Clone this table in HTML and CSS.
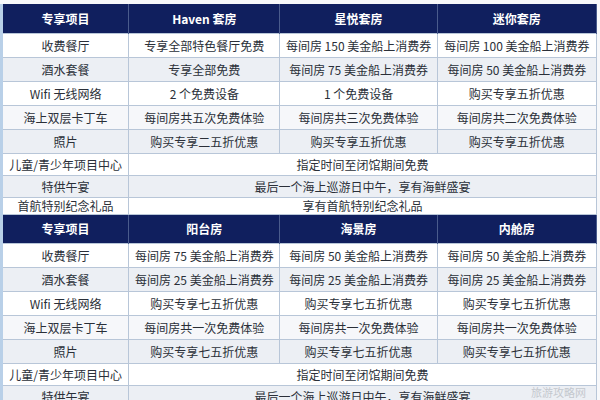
FILE: index.html
```html
<!DOCTYPE html>
<html lang="zh">
<head>
<meta charset="utf-8">
<link rel="stylesheet" href="styles.css">
</head>
<body>
<div class="page">
<table class="grid">
  <colgroup><col class="c1"><col class="c2"><col class="c3"><col class="c4"></colgroup>
  <tr class="head"><th>专享项目</th><th>Haven 套房</th><th>星悦套房</th><th>迷你套房</th></tr>
  <tr class="w"><td>收费餐厅</td><td>专享全部特色餐厅免费</td><td>每间房 150 美金船上消费券</td><td>每间房 100 美金船上消费券</td></tr>
  <tr class="g"><td>酒水套餐</td><td>专享全部免费</td><td>每间房 75 美金船上消费券</td><td>每间房 50 美金船上消费券</td></tr>
  <tr class="w"><td>Wifi 无线网络</td><td>2 个免费设备</td><td>1 个免费设备</td><td>购买专享五折优惠</td></tr>
  <tr class="l"><td>海上双层卡丁车</td><td>每间房共五次免费体验</td><td>每间房共三次免费体验</td><td>每间房共二次免费体验</td></tr>
  <tr class="g"><td>照片</td><td>购买专享二五折优惠</td><td>购买专享五折优惠</td><td>购买专享五折优惠</td></tr>
  <tr class="w sm"><td>儿童/青少年项目中心</td><td colspan="3">指定时间至闭馆期间免费</td></tr>
  <tr class="g sm"><td>特供午宴</td><td colspan="3">最后一个海上巡游日中午，享有海鲜盛宴</td></tr>
  <tr class="w xs"><td>首航特别纪念礼品</td><td colspan="3">享有首航特别纪念礼品</td></tr>
  <tr class="head h2"><th>专享项目</th><th>阳台房</th><th>海景房</th><th>内舱房</th></tr>
  <tr class="w"><td>收费餐厅</td><td>每间房 75 美金船上消费券</td><td>每间房 50 美金船上消费券</td><td>每间房 50 美金船上消费券</td></tr>
  <tr class="g"><td>酒水套餐</td><td>每间房 25 美金船上消费券</td><td>每间房 25 美金船上消费券</td><td>每间房 25 美金船上消费券</td></tr>
  <tr class="w"><td>Wifi 无线网络</td><td>购买专享七五折优惠</td><td>购买专享七五折优惠</td><td>购买专享七五折优惠</td></tr>
  <tr class="l"><td>海上双层卡丁车</td><td>每间房共一次免费体验</td><td>每间房共一次免费体验</td><td>每间房共一次免费体验</td></tr>
  <tr class="g"><td>照片</td><td>购买专享七五折优惠</td><td>购买专享七五折优惠</td><td>购买专享七五折优惠</td></tr>
  <tr class="w sm"><td>儿童/青少年项目中心</td><td colspan="3">指定时间至闭馆期间免费</td></tr>
  <tr class="g sm"><td>特供午宴</td><td colspan="3">最后一个海上巡游日中午，享有海鲜盛宴</td></tr>
</table>
<div class="mark">旅游攻略网</div>
</div>
</body>
</html>
```
FILE: styles.css
```css
html, body {
  margin: 0;
  padding: 0;
  background: #ffffff;
}
.page {
  width: 600px;
  height: 400px;
  overflow: hidden;
  position: relative;
  padding-top: 4px;
  box-sizing: border-box;
  background: #f7f8fa;
}
.grid {
  width: 597px;
  border-collapse: collapse;
  table-layout: fixed;
  font-family: "Noto Sans CJK SC", "Noto Sans", sans-serif;
  font-size: 12px;
  color: #2a2f38;
  border-left: 3px solid #b9d0e8;
}
.c1 { width: 127px; }
.c2 { width: 151px; }
.c3 { width: 157px; }
.c4 { width: 159px; }
.grid td, .grid th {
  text-align: center;
  vertical-align: middle;
  padding: 0;
  white-space: nowrap;
  overflow: hidden;
  line-height: 14px;
}
.grid td {
  border: 1px solid #b8c6d8;
  height: 23px;
}
.grid th {
  background: #101f5e;
  color: #ffffff;
  font-weight: bold;
  height: 29px;
  border-left: 1px solid #4a5b8c;
  border-right: 1px solid #4a5b8c;
}
.grid tr.h2 th { height: 28px; }
.grid tr.w td { background: #ffffff; }
.grid tr.g td { background: #eceff4; }
.grid tr.l td { background: #f6f7fa; }
.grid tr.sm td { height: 21px; }
.grid tr.xs td { height: 16px; }
.mark {
  position: absolute;
  right: 14px;
  bottom: 0;
  font-family: "Noto Sans CJK SC", sans-serif;
  font-size: 11px;
  color: #c4c8ce;
}
```
